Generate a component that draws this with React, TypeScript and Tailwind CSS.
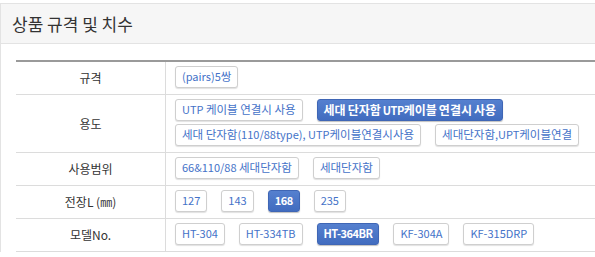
import React from "react";

interface Opt {
  label: string;
  active?: boolean;
}

interface Row {
  name: string;
  options: Opt[];
}

const rows: Row[] = [
  { name: "규격", options: [{ label: "(pairs)5쌍" }] },
  {
    name: "용도",
    options: [
      { label: "UTP 케이블 연결시 사용" },
      { label: "세대 단자함 UTP케이블 연결시 사용", active: true },
      { label: "세대 단자함(110/88type), UTP케이블연결시사용" },
      { label: "세대단자함,UPT케이블연결" },
    ],
  },
  {
    name: "사용범위",
    options: [{ label: "66&110/88 세대단자함" }, { label: "세대단자함" }],
  },
  {
    name: "전장L (㎜)",
    options: [
      { label: "127" },
      { label: "143" },
      { label: "168", active: true },
      { label: "235" },
    ],
  },
  {
    name: "모델No.",
    options: [
      { label: "HT-304" },
      { label: "HT-334TB" },
      { label: "HT-364BR", active: true },
      { label: "KF-304A" },
      { label: "KF-315DRP" },
    ],
  },
];

// latin runs are set a touch smaller so they sit narrow like the original font
function Label({ text, active }: { text: string; active?: boolean }) {
  const parts = text.split(/([\uAC00-\uD7A3]+)/).filter(Boolean);
  return (
    <span>
      {parts.map((p, i) =>
        /[\uAC00-\uD7A3]/.test(p) ? (
          <span key={i} className={active ? "text-[12px]" : ""}>
            {p}
          </span>
        ) : (
          <span
            key={i}
            className={
              active ? "text-[11px] tracking-[-0.5px]" : "text-[11px]"
            }
          >
            {p}
          </span>
        )
      )}
    </span>
  );
}

function OptionButton({ label, active }: Opt) {
  return active ? (
    <span className="inline-flex h-[22px] items-center rounded-[3px] border border-[#3f66b5] bg-gradient-to-b from-[#5580cf] to-[#416cbf] px-[6px] text-[11.5px] font-bold text-white shadow-[0_1px_1px_rgba(0,0,0,0.25)]">
      <Label text={label} active />
    </span>
  ) : (
    <span className="inline-flex h-[22px] items-center rounded-[3px] border border-[#cfcfcf] bg-white px-[6px] text-[11.5px] text-[#4472c8] shadow-[0_1px_1px_rgba(0,0,0,0.12)]">
      <Label text={label} />
    </span>
  );
}

export default function App() {
  return (
    <div
      className="h-[257px] w-[595px] overflow-hidden bg-white pt-[3px]"
      style={{ fontFamily: '"Noto Sans CJK KR", "Noto Sans", sans-serif' }}
    >
      <div className="w-[640px] border-l border-t border-[#e3e3e3]">
        {/* Heading */}
        <div className="flex h-[40px] items-center border-b border-[#e3e3e3] bg-[#f6f6f6] pl-[11px] text-[17px] text-[#333]">
          상품 규격 및 치수
        </div>

        {/* Spec table */}
        <div className="pl-[15px] pt-[16px]">
          <div className="border-t-2 border-[#9a9a9a]">
            {rows.map((row) => (
              <div key={row.name} className="flex border-b border-[#dcdcdc]">
                <div className="flex w-[150px] shrink-0 items-center justify-center border-r border-[#dcdcdc] text-[12px] text-[#333]">
                  {row.name}
                </div>
                <div className="flex flex-1 flex-wrap gap-x-[14px] gap-y-[3px] pb-[6px] pl-[9px] pt-[4px]">
                  {row.options.map((o) => (
                    <OptionButton key={o.label} {...o} />
                  ))}
                </div>
              </div>
            ))}
          </div>
        </div>
      </div>
    </div>
  );
}
